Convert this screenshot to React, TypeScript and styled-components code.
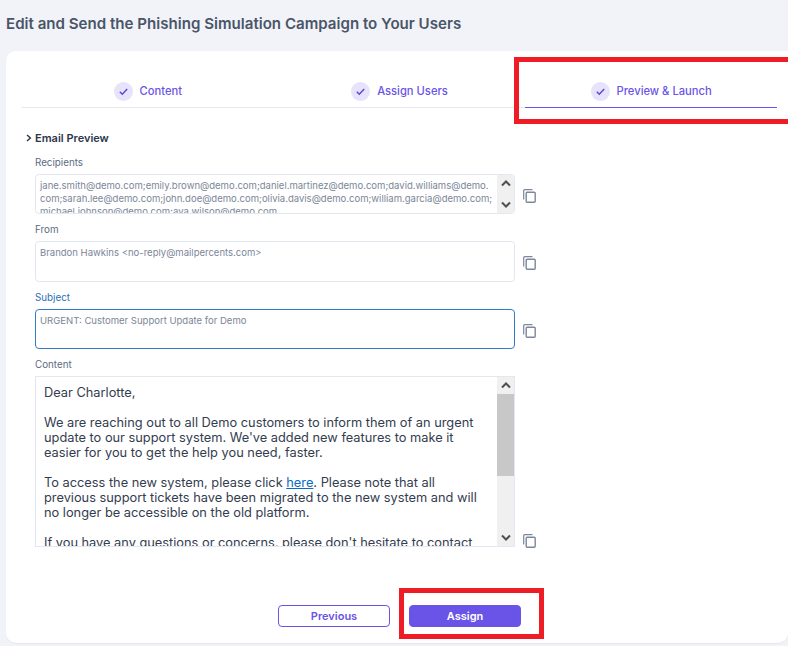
import * as React from "react";
import styled, { createGlobalStyle } from "styled-components";

const GlobalStyle = createGlobalStyle`
    html, body {
        margin: 0;
        padding: 0;
        height: 646px;
        overflow: hidden;
        background: #f1f3f8;
        font-family: Inter, "Liberation Sans", sans-serif;
    }
`;

const Page = styled.div`
    position: relative;
    width: 788px;
    height: 646px;
    overflow: hidden;
    padding: 14px 0 3px 6px;
    box-sizing: border-box;
    display: flex;
    flex-direction: column;
`;

const Heading = styled.h1`
    margin: 0 0 18px;
    height: 19px;
    font-size: 15.1px;
    line-height: 19px;
    font-weight: 600;
    color: #4a5568;
`;

const Card = styled.main`
    flex: 1;
    background: #fff;
    border-radius: 10px 0 10px 10px;
    padding: 20px 11px 0 16px;
    display: flex;
    flex-direction: column;
    box-shadow: 0 1px 1px rgba(40, 50, 80, 0.06);
`;

const Tabs = styled.nav`
    display: grid;
    grid-template-columns: repeat(3, 1fr);
    border-bottom: 1px solid #e6e8ee;
    height: 36px;
`;

const Tab = styled.div<{ $active?: boolean }>`
    display: flex;
    align-items: flex-end;
    justify-content: center;
    gap: 7px;
    height: 37px;
    padding-bottom: 6px;
    box-sizing: border-box;
    font-size: 11.2px;
    line-height: 19px;
    font-weight: 500;
    color: #6a54e8;
    border-bottom: 1px solid ${(p) => (p.$active ? "#6a54e8" : "transparent")};
`;

const CheckCircle = styled.span`
    width: 19px;
    height: 19px;
    border-radius: 50%;
    background: #e7e3fb;
    display: flex;
    align-items: center;
    justify-content: center;
`;

const Section = styled.div`
    margin: 23px 0 0 4px;
    display: flex;
    align-items: center;
    gap: 3px;
    height: 13px;
    font-size: 11px;
    font-weight: 600;
    color: #2b3648;
`;

const Fields = styled.div`
    margin: 13px 0 0 13px;
    display: flex;
    flex-direction: column;
`;

const FieldLabel = styled.label<{ $focused?: boolean }>`
    display: block;
    height: 12px;
    font-size: 9.8px;
    line-height: 12px;
    margin-bottom: 5px;
    color: ${(p) => (p.$focused ? "#2a6fb5" : "#5b6b80")};
`;

const FieldRow = styled.div<{ $gap: number }>`
    display: flex;
    align-items: flex-end;
    gap: 8px;
    margin-bottom: ${(p) => p.$gap}px;
`;

const Box = styled.div<{ $height: number; $focused?: boolean }>`
    width: 480px;
    height: ${(p) => p.$height}px;
    box-sizing: border-box;
    border: 1px solid ${(p) => (p.$focused ? "#2f7cc7" : "#e2e7f0")};
    border-radius: 4px;
    display: flex;
    overflow: hidden;
    background: #fff;
`;

const BoxText = styled.div`
    flex: 1;
    min-width: 0;
    padding: 4px 4px 0 4px;
    font-size: 9.53px;
    line-height: 13px;
    color: #7b8698;
    overflow: hidden;
`;

const Line = styled.div`
    white-space: nowrap;
`;

const ContentBox = styled(Box)`
    border-radius: 0;
`;

const Letter = styled.div`
    flex: 1;
    min-width: 0;
    padding: 8px 0 0 8px;
    font-size: 12.8px;
    line-height: 15px;
    color: #333d4f;
    overflow: hidden;
`;

const Para = styled.p`
    margin: 0 0 15px;
    white-space: nowrap;
`;

const MailLink = styled.span`
    color: #0a6ac8;
    text-decoration: underline;
`;

const Scrollbar = styled.div`
    width: 17px;
    flex: none;
    background: #f0f0f0;
    display: flex;
    flex-direction: column;
`;

const ScrollButton = styled.div`
    height: 17px;
    flex: none;
    display: flex;
    align-items: center;
    justify-content: center;
`;

const ScrollTrack = styled.div`
    flex: 1;
`;

const ScrollThumb = styled.div`
    height: 82px;
    background: #c8c8c8;
`;

const CopyButton = styled.span<{ $lift: number }>`
    width: 13px;
    height: 14px;
    flex: none;
    display: block;
    margin-bottom: ${(p) => p.$lift}px;
`;

const Actions = styled.div`
    margin: 58px 0 0 256px;
    display: flex;
    gap: 19px;
`;

const Button = styled.button<{ $primary?: boolean }>`
    width: 112px;
    height: 22px;
    padding: 0;
    box-sizing: border-box;
    border-radius: 4px;
    border: 1px solid #6a54e8;
    background: ${(p) => (p.$primary ? "#6a54e8" : "#fff")};
    color: ${(p) => (p.$primary ? "#fff" : "#6a54e8")};
    font-family: inherit;
    font-size: 11px;
    font-weight: 600;
`;

const Callout = styled.div<{ $x: number; $y: number; $w: number; $h: number }>`
    position: absolute;
    left: ${(p) => p.$x}px;
    top: ${(p) => p.$y}px;
    width: ${(p) => p.$w}px;
    height: ${(p) => p.$h}px;
    box-sizing: border-box;
    border: 5px solid #ee1c25;
`;

const Check: React.FC = () => (
    <svg width="11" height="11" viewBox="0 0 11 11" fill="none">
        <path d="M1.8 5.8 4.3 8.2 9.2 3" stroke="#5a45d6" strokeWidth="1.4" />
    </svg>
);

const Chevron: React.FC<{ up?: boolean }> = ({ up }) => (
    <svg width="10" height="7" viewBox="0 0 10 7" fill="none">
        <path
            d={up ? "M1 5.5 5 1.5 9 5.5" : "M1 1.5 5 5.5 9 1.5"}
            stroke="#4f4f4f"
            strokeWidth="2"
        />
    </svg>
);

const Copy: React.FC<{ lift: number }> = ({ lift }) => (
    <CopyButton $lift={lift}>
        <svg width="13" height="14" viewBox="0 0 13 14" fill="none">
            <path d="M.7 10.5V1.8C.7 1.1 1.1.7 1.8.7H9.5" stroke="#7b879b" strokeWidth="1.2" />
            <rect x="3.2" y="3.2" width="9" height="10.1" rx="1" stroke="#7b879b" strokeWidth="1.4" />
        </svg>
    </CopyButton>
);

const ScrollBar: React.FC<{ thumb?: boolean }> = ({ thumb }) => (
    <Scrollbar>
        <ScrollButton>
            <Chevron up />
        </ScrollButton>
        <ScrollTrack>{thumb && <ScrollThumb />}</ScrollTrack>
        <ScrollButton>
            <Chevron />
        </ScrollButton>
    </Scrollbar>
);

const TabItem: React.FC<{ label: string; active?: boolean }> = ({ label, active }) => (
    <Tab $active={active}>
        <CheckCircle>
            <Check />
        </CheckCircle>
        {label}
    </Tab>
);

export default function App() {
    return (
        <Page>
            <GlobalStyle />
            <Heading>Edit and Send the Phishing Simulation Campaign to Your Users</Heading>
            <Card>
                <Tabs>
                    <TabItem label="Content" />
                    <TabItem label="Assign Users" />
                    <TabItem label="Preview & Launch" active />
                </Tabs>
                <Section>
                    <svg width="6" height="8" viewBox="0 0 6 8" fill="none">
                        <path d="M1 1 4.4 4 1 7" stroke="#2b3648" strokeWidth="1.4" />
                    </svg>
                    Email Preview
                </Section>
                <Fields>
                    <FieldLabel>Recipients</FieldLabel>
                    <FieldRow $gap={10}>
                        <Box $height={40}>
                            <BoxText>
                                <Line>jane.smith@demo.com;emily.brown@demo.com;daniel.martinez@demo.com;david.williams@demo.</Line>
                                <Line>com;sarah.lee@demo.com;john.doe@demo.com;olivia.davis@demo.com;william.garcia@demo.com;</Line>
                                <Line>michael.johnson@demo.com;ava.wilson@demo.com</Line>
                            </BoxText>
                            <ScrollBar />
                        </Box>
                        <Copy lift={13} />
                    </FieldRow>
                    <FieldLabel>From</FieldLabel>
                    <FieldRow $gap={10}>
                        <Box $height={41}>
                            <BoxText>Brandon Hawkins &lt;no-reply@mailpercents.com&gt;</BoxText>
                        </Box>
                        <Copy lift={14} />
                    </FieldRow>
                    <FieldLabel $focused>Subject</FieldLabel>
                    <FieldRow $gap={10}>
                        <Box $height={40} $focused>
                            <BoxText>URGENT: Customer Support Update for Demo</BoxText>
                        </Box>
                        <Copy lift={13} />
                    </FieldRow>
                    <FieldLabel>Content</FieldLabel>
                    <FieldRow $gap={0}>
                        <ContentBox $height={171}>
                            <Letter>
                                <Para>Dear Charlotte,</Para>
                                <Para>
                                    We are reaching out to all Demo customers to inform them of an urgent
                                    <br />
                                    update to our support system. We've added new features to make it
                                    <br />
                                    easier for you to get the help you need, faster.
                                </Para>
                                <Para>
                                    To access the new system, please click <MailLink>here</MailLink>. Please note that all
                                    <br />
                                    previous support tickets have been migrated to the new system and will
                                    <br />
                                    no longer be accessible on the old platform.
                                </Para>
                                <Para>If you have any questions or concerns, please don't hesitate to contact</Para>
                            </Letter>
                            <ScrollBar thumb />
                        </ContentBox>
                        <Copy lift={1} />
                    </FieldRow>
                </Fields>
                <Actions>
                    <Button>Previous</Button>
                    <Button $primary>Assign</Button>
                </Actions>
            </Card>
            <Callout $x={514} $y={57} $w={280} $h={67} />
            <Callout $x={399} $y={588} $w={145} $h={51} />
        </Page>
    );
}
